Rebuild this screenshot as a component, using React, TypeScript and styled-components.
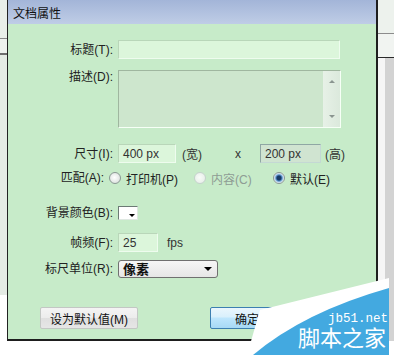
import React from "react";
import styled, { createGlobalStyle } from "styled-components";

const GlobalStyle = createGlobalStyle`
  html, body {
    margin: 0;
    padding: 0;
    background: #ffffff;
  }
  body {
    font-family: "Liberation Sans", "Noto Sans CJK SC", sans-serif;
    font-size: 12px;
    color: #1c1c1c;
  }
`;

const Page = styled.div`
  position: relative;
  width: 394px;
  height: 355px;
  overflow: hidden;
  background: #ffffff;
`;

const Top = styled.div`
  display: flex;
  height: 341px;
`;

const LeftStrip = styled.div`
  width: 7px;
  flex-shrink: 0;
  background: linear-gradient(
    to bottom,
    #e9efe9 0 38px,
    #8a8a8a 38px 39px,
    #eef2ee 39px 53px,
    #6d6d6d 53px 55px,
    #e4ebe4 55px 295px,
    #ffffff 295px
  );
`;

const RightStrip = styled.div`
  flex: 1;
  background:
    linear-gradient(
      to bottom,
      #edf2ed 0 33px,
      #8c8c8c 33px 34px,
      #f1f4f1 34px 57px,
      #2a2a2a 57px 58px,
      transparent 58px
    ),
    linear-gradient(to right, #f6f6f6 0 7px, #d3d3d3 7px);
`;

const Dialog = styled.div`
  width: 371px;
  flex-shrink: 0;
  box-sizing: border-box;
  border-left: 1px solid #222;
  border-right: 2px solid #1e1e1e;
  border-bottom: 2px solid #1e1e1e;
  background: #c7ebc9;
  display: flex;
  flex-direction: column;
`;

const TitleBar = styled.div`
  height: 24px;
  display: flex;
  align-items: center;
  padding-left: 5px;
  background: linear-gradient(to bottom, #a3b5d8, #bfcde6);
  color: #111;
  font-size: 12px;
`;

const Body = styled.div`
  display: flex;
  flex-direction: column;
  padding-top: 16px;
`;

const Row = styled.div<{ $mt: number; $h: number; $top?: boolean }>`
  display: flex;
  align-items: ${(p) => (p.$top ? "flex-start" : "center")};
  margin-top: ${(p) => p.$mt}px;
  height: ${(p) => p.$h}px;
`;

const Label = styled.div<{ $w?: number }>`
  width: ${(p) => p.$w ?? 105}px;
  flex-shrink: 0;
  margin-right: 5px;
  text-align: right;
  white-space: nowrap;
  line-height: 14px;
  color: #222;
`;

const TextInput = styled.div<{ $w: number; $disabled?: boolean; $ml?: number }>`
  width: ${(p) => p.$w}px;
  height: 19px;
  margin-left: ${(p) => p.$ml ?? 0}px;
  box-sizing: border-box;
  display: flex;
  align-items: center;
  padding-left: 4px;
  color: #333;
  background: ${(p) => (p.$disabled ? "#d0e4d1" : "#dcf6db")};
  border: 1px solid;
  border-color: ${(p) =>
    p.$disabled
      ? "#8fa7a4 #c4d8d4 #c4d8d4 #8fa7a4"
      : "#b9d6b9 #eefcee #eefcee #b9d6b9"};
`;

const TextArea = styled.div`
  width: 223px;
  height: 58px;
  box-sizing: border-box;
  display: flex;
  justify-content: flex-end;
  background: #cde6cd;
  border: 1px solid;
  border-color: #9fb69f #f6fff6 #f6fff6 #9fb69f;
`;

const Scrollbar = styled.div`
  width: 17px;
  display: flex;
  flex-direction: column;
  justify-content: space-between;
  align-items: center;
  padding: 9px 0 9px;
  background: linear-gradient(to right, #e7f1e7, #dbe9dc);
`;

const Arrow = styled.span<{ $up?: boolean; $color?: string; $size?: number }>`
  width: 0;
  height: 0;
  border-left: ${(p) => p.$size ?? 3}px solid transparent;
  border-right: ${(p) => p.$size ?? 3}px solid transparent;
  ${(p) =>
    p.$up
      ? `border-bottom: ${p.$size ?? 3}px solid ${p.$color ?? "#8a9590"};`
      : `border-top: ${p.$size ?? 3}px solid ${p.$color ?? "#8a9590"};`}
`;

const Unit = styled.span<{ $ml: number }>`
  margin-left: ${(p) => p.$ml}px;
  color: #333;
  white-space: nowrap;
`;

const RadioItem = styled.div<{ $w?: number }>`
  display: flex;
  align-items: center;
  gap: 5px;
  ${(p) => (p.$w ? `width: ${p.$w}px;` : "")}
`;

const RadioText = styled.span<{ $disabled?: boolean }>`
  color: ${(p) => (p.$disabled ? "#8e9c94" : "#222")};
  white-space: nowrap;
`;

const RadioCircle = styled.span<{ $state: "off" | "disabled" | "on" }>`
  width: 12px;
  height: 12px;
  box-sizing: border-box;
  border-radius: 50%;
  border: 1px solid
    ${(p) => (p.$state === "disabled" ? "#c5d2cc" : "#8a9893")};
  background: ${(p) =>
    p.$state === "on"
      ? "radial-gradient(circle at 50% 50%, #173a66 0 2px, #4f86c0 3px, #a9cbe9 4px, #eef3f8 5px)"
      : p.$state === "disabled"
      ? "radial-gradient(circle at 45% 45%, #f8fbf8, #e3ebe5)"
      : "radial-gradient(circle at 45% 45%, #ffffff, #d3dad6)"};
`;

const Swatch = styled.div`
  position: relative;
  width: 20px;
  height: 14px;
  box-sizing: border-box;
  background: #ffffff;
  border: 1px solid;
  border-color: #6c7a75 #dfe8e2 #dfe8e2 #6c7a75;
  &::after {
    content: "";
    position: absolute;
    right: 2px;
    bottom: 2px;
    border-left: 3px solid transparent;
    border-right: 3px solid transparent;
    border-top: 3px solid #000;
  }
`;

const Select = styled.div`
  width: 100px;
  height: 18px;
  box-sizing: border-box;
  display: flex;
  align-items: center;
  justify-content: space-between;
  padding: 0 5px 0 4px;
  border: 1px solid #707070;
  border-radius: 3px;
  background: linear-gradient(to bottom, #f6f6f6, #e6e6e6);
`;

const SelectText = styled.span`
  font-family: "Noto Sans CJK SC", sans-serif;
  font-size: 13px;
  font-weight: 700;
  line-height: 16px;
  color: #111;
`;

const ButtonRow = styled.div`
  display: flex;
  margin-top: 29px;
  padding-left: 32px;
`;

const Button = styled.div<{ $primary?: boolean; $w: number; $ml?: number }>`
  width: ${(p) => p.$w}px;
  height: 22px;
  margin-left: ${(p) => p.$ml ?? 0}px;
  box-sizing: border-box;
  display: flex;
  align-items: center;
  justify-content: center;
  border-radius: 2px;
  color: #111;
  border: 1px solid ${(p) => (p.$primary ? "#3c7fb1" : "#c3c7c4")};
  background: ${(p) =>
    p.$primary
      ? "linear-gradient(to bottom, #eaf6fd 0%, #d9f0fc 45%, #bee6fd 50%, #a7d9f5 100%)"
      : "linear-gradient(to bottom, #f4f4f4 0%, #ececec 50%, #dfdfdf 51%, #e6e6e6 100%)"};
`;

const Watermark = styled.div`
  position: absolute;
  left: 244px;
  top: 276px;
  width: 150px;
  height: 79px;
`;

const WatermarkShape = styled.svg`
  position: absolute;
  left: 0;
  top: 0;
`;

const SiteText = styled.div`
  position: absolute;
  left: 84px;
  top: 38px;
  font-family: "Liberation Mono", monospace;
  font-size: 12.5px;
  line-height: 11px;
  color: #ffffff;
`;

const BrandText = styled.div`
  position: absolute;
  left: 54px;
  top: 52px;
  font-family: "Liberation Sans", "Noto Sans CJK SC", sans-serif;
  font-size: 22px;
  line-height: 22px;
  color: #ffffff;
  white-space: nowrap;
`;

export default function App() {
  return (
    <>
      <GlobalStyle />
      <Page>
        <Top>
          <LeftStrip />
          <Dialog>
            <TitleBar>文档属性</TitleBar>
            <Body>
              <Row $mt={0} $h={19}>
                <Label>标题(T):</Label>
                <TextInput $w={222} />
              </Row>
              <Row $mt={11} $h={58} $top>
                <Label>描述(D):</Label>
                <TextArea>
                  <Scrollbar>
                    <Arrow $up />
                    <Arrow />
                  </Scrollbar>
                </TextArea>
              </Row>
              <Row $mt={16} $h={19}>
                <Label>尺寸(I):</Label>
                <TextInput $w={58}>400 px</TextInput>
                <Unit $ml={6}>(宽)</Unit>
                <Unit $ml={33}>x</Unit>
                <TextInput $w={61} $ml={19} $disabled>
                  200 px
                </TextInput>
                <Unit $ml={4}>(高)</Unit>
              </Row>
              <Row $mt={7} $h={16}>
                <Label $w={96}>匹配(A):</Label>
                <RadioItem $w={85}>
                  <RadioCircle $state="off" />
                  <RadioText>打印机(P)</RadioText>
                </RadioItem>
                <RadioItem $w={79}>
                  <RadioCircle $state="disabled" />
                  <RadioText $disabled>内容(C)</RadioText>
                </RadioItem>
                <RadioItem>
                  <RadioCircle $state="on" />
                  <RadioText>默认(E)</RadioText>
                </RadioItem>
              </Row>
              <Row $mt={20} $h={14}>
                <Label>背景颜色(B):</Label>
                <Swatch />
              </Row>
              <Row $mt={13} $h={19}>
                <Label>帧频(F):</Label>
                <TextInput $w={40}>25</TextInput>
                <Unit $ml={9}>fps</Unit>
              </Row>
              <Row $mt={8} $h={18}>
                <Label>标尺单位(R):</Label>
                <Select>
                  <SelectText>像素</SelectText>
                  <Arrow $color="#000" $size={4} />
                </Select>
              </Row>
              <ButtonRow>
                <Button $w={98}>设为默认值(M)</Button>
                <Button $w={74} $ml={72} $primary>
                  确定
                </Button>
              </ButtonRow>
            </Body>
          </Dialog>
          <RightStrip />
        </Top>
        <Watermark>
          <WatermarkShape width="150" height="79" viewBox="0 0 150 79">
            <polygon points="16,34 145,2 145,13 9,79 3,79" fill="#ffffff" />
            <path d="M9,79 Q60,36 145,12 L145,79 Z" fill="#43a9e0" />
          </WatermarkShape>
          <SiteText>jb51.net</SiteText>
          <BrandText>脚本之家</BrandText>
        </Watermark>
      </Page>
    </>
  );
}
